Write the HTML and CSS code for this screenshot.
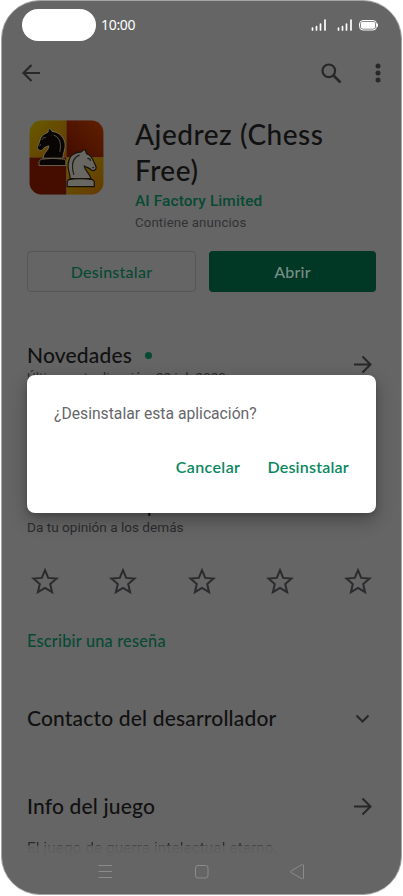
FILE: index.html
```html
<!DOCTYPE html>
<html lang="es">
<head>
<meta charset="utf-8">
<title>Ajedrez (Chess Free)</title>
<link rel="stylesheet" href="styles.css">
</head>
<body>
<div class="phone">
  <header class="status">
    <span class="camera"></span>
    <span class="clock">10:00</span>
    <svg class="signals" width="67" height="14" viewBox="0 0 67 14" fill="none" stroke="#fff" stroke-width="2" stroke-linecap="round"><path d="M1.500 12v-2M5.500 12V8.500M9.500 12V6M14 12V2M27.500 12v-2M31.500 12V8.500M35.500 12V6M40 12V2" stroke-width="1.700"/><rect x="48.500" y="2.500" width="17" height="9.500" rx="3.500" stroke-width="1"/><rect x="49.800" y="3.800" width="14.400" height="6.900" rx="2" fill="#fff" stroke="none"/><path d="M66.500 6v2.500" stroke-width="1"/></svg>
  </header>
  <nav class="toolbar">
    <svg class="back" width="19" height="18" viewBox="0 0 19 18" fill="none" stroke="#28282b" stroke-width="2.200"><path d="M18 9H1.500M9.500 1 1.500 9l8 8"/></svg>
    <svg class="search" width="21" height="21" viewBox="0 0 21 21" fill="none" stroke="#28282b"><circle cx="7.800" cy="7.800" r="6.300" stroke-width="2.200"/><path d="m12.500 12.500 7 7" stroke-width="2.700"/></svg>
    <svg class="more" width="6" height="20" viewBox="0 0 6 20" fill="#28282b"><circle cx="3" cy="3" r="2.500"/><circle cx="3" cy="10" r="2.500"/><circle cx="3" cy="17" r="2.500"/></svg>
  </nav>
  <main>
    <section class="app">
      <svg class="logo" width="75" height="75" viewBox="29 32 224 224">
        <defs>
          <clipPath id="tile"><rect x="30" y="33" width="222" height="222" rx="38"/></clipPath>
          <linearGradient id="gold" x1="0" y1="0" x2="1" y2="1"><stop offset="0" stop-color="#675b00"/><stop offset="1" stop-color="#653900"/></linearGradient>
          <linearGradient id="rust" x1="1" y1="0" x2="0" y2="1"><stop offset="0" stop-color="#602000"/><stop offset="1" stop-color="#430b00"/></linearGradient>
        </defs>
        <g clip-path="url(#tile)">
          <path d="M30 33h111v111H30z" fill="url(#gold)"/><path d="M141 33h111v111H141z" fill="url(#rust)"/>
          <path d="M30 144h111v111H30z" fill="#440d00"/><path d="M141 144h111v111H141z" fill="url(#gold)"/>
        </g>
        <g fill="#080504" stroke="#77705c" stroke-width="2.500" stroke-linejoin="round">
          <path d="M71 146c3-20 18-23 17-37-8 3-15 5-18 11-3 5-8 4-14 0-3-3-2-8 0-12 6-12 5-20 13-29 5-6 14-8 17-11 0-5 2-9 5-11 3 4 5 6 7 9 25 3 36 20 39 38 1 16-6 25-7 42z"/>
          <path d="M65 149q35-5 70 0l4 5v14H59v-12z"/>
        </g>
        <path d="M68 91c3-6 6-7 11-7M60 109l5-4M103 77c22 9 22 31 18 50" fill="none" stroke="#68634f" stroke-width="2.500"/>
        <g fill="#686762" stroke="#171008" stroke-width="3.500" stroke-linejoin="round">
          <path d="M152 207c-1-18-8-25-6-44 2-21 16-35 39-36 4-4 7-6 11-7 2 5 4 9 5 13 15 5 19 16 22 25 4 9 9 14 6 20-4 7-13 7-16 1-6-5-15-6-19-10 2 16 17 22 20 38z"/>
          <path d="M147 210q35-6 72 0l5 6v15h-81v-15z"/>
        </g>
        <path d="M180 137c-24 9-24 34-17 59M203 147c6-1 9 2 10 7M218 175l5-2" fill="none" stroke="#211b13" stroke-width="3.500"/>
      </svg>
      <div class="about">
        <h1><span class="t1">Ajedrez (Chess</span><br><span class="t2">Free)</span></h1>
        <p class="maker">AI Factory Limited</p>
        <p class="ads">Contiene anuncios</p>
      </div>
    </section>
    <div class="actions"><button class="btn outline">Desinstalar</button><button class="btn solid">Abrir</button></div>
    <section class="news">
      <div><h2>Novedades<i class="dot"></i></h2><p class="updated">Última actualización: 22 jul. 2020</p></div>
      <svg width="19" height="19" viewBox="0 0 19 19" fill="none" stroke="#28282b" stroke-width="2"><path d="M1 9.500h16.500M9.500 1.500l8 8-8 8"/></svg>
    </section>
    <section class="rate">
      <h2>Valora esta aplicación</h2>
      <p>Da tu opinión a los demás</p>
      <div class="stars">
        <svg viewBox="0 0 28 27"><path d="m14 2.200 3.200 7.700 8.300.7-6.300 5.400 1.900 8.200-7.100-4.300-7.100 4.300L8.800 16l-6.300-5.400 8.300-.7z"/></svg>
        <svg viewBox="0 0 28 27"><path d="m14 2.200 3.200 7.700 8.300.7-6.300 5.400 1.900 8.200-7.100-4.300-7.100 4.300L8.800 16l-6.300-5.400 8.300-.7z"/></svg>
        <svg viewBox="0 0 28 27"><path d="m14 2.200 3.200 7.700 8.300.7-6.300 5.400 1.900 8.200-7.100-4.300-7.100 4.300L8.800 16l-6.300-5.400 8.300-.7z"/></svg>
        <svg viewBox="0 0 28 27"><path d="m14 2.200 3.200 7.700 8.300.7-6.300 5.400 1.900 8.200-7.100-4.300-7.100 4.300L8.800 16l-6.300-5.400 8.300-.7z"/></svg>
        <svg viewBox="0 0 28 27"><path d="m14 2.200 3.200 7.700 8.300.7-6.300 5.400 1.900 8.200-7.100-4.300-7.100 4.300L8.800 16l-6.300-5.400 8.300-.7z"/></svg>
      </div>
      <a class="review">Escribir una reseña</a>
    </section>
    <section class="row contact"><h2>Contacto del desarrollador</h2><svg width="19" height="19" viewBox="0 0 19 19" fill="none" stroke="#28282b" stroke-width="2"><path d="m3.500 6.500 6 6 6-6"/></svg></section>
    <section class="row info"><h2>Info del juego</h2><svg width="19" height="19" viewBox="0 0 19 19" fill="none" stroke="#28282b" stroke-width="2"><path d="M1 9.500h16.500M9.500 1.500l8 8-8 8"/></svg></section>
    <p class="summary"><span>El juego de guerra intelectual eterno.</span></p>
  </main>
  <footer class="keys">
    <svg width="207" height="17" viewBox="0 0 207 17" fill="none" stroke="#8c8c8c" stroke-width="1"><path d="M.5 2.500H14M.5 8.500H14M.5 14.500H14"/><rect x="97.500" y="2.500" width="12.500" height="12.500" rx="2.500"/><path d="M205.500 2v13.500q-1 .5-2 0L193 9.500q-1-.7 0-1.400l10.500-6.300q1-.5 2 .2z"/></svg>
  </footer>
  <div class="dialog" role="dialog">
    <p>¿Desinstalar esta aplicación?</p>
    <div class="choices"><button class="cancel">Cancelar</button><button class="confirm">Desinstalar</button></div>
  </div>
</div>
</body>
</html>
```
FILE: styles.css
```css
* { box-sizing: border-box; margin: 0; padding: 0; }
body { background: #fff; width: 403px; height: 896px; overflow: hidden; font-family: Roboto, sans-serif; color: #2b2b2d; }
svg { display: block; flex: none; }
button { border: 0; background: none; font: inherit; }
.phone { position: relative; width: 401px; height: 895px; margin-left: 1px; background: #656565; border: 1px solid #a5a6a5; border-radius: 39px; overflow: hidden; display: flex; flex-direction: column; }
.status { height: 49px; padding: 8px 23px 0 20px; display: flex; align-items: flex-start; flex: none; }
.camera { width: 74px; height: 32px; border-radius: 16px; background: #fff; }
.clock { margin: 6px 0 0 5px; font: 14px/20px "Noto Sans", sans-serif; color: #fff; letter-spacing: -.3px; }
.signals { margin: 9px 0 0 auto; }
.toolbar { height: 46px; display: flex; align-items: center; padding: 0 20px 0 20px; flex: none; }
.search { margin-left: auto; }
.more { margin-left: 33px; }
main { padding: 0 25px; flex: none; }
.app { padding: 24px 0 0 2px; display: flex; height: 155px; }
.about { margin-left: 31px; }
h1, h2, .btn, .review, .choices { font-family: Lato, sans-serif; font-weight: 500; }
h1 { font-size: 28px; line-height: 36px; margin-top: -4px; color: #111; white-space: nowrap; }
.t1 { letter-spacing: .52px; }
.t2 { letter-spacing: .5px; }
.maker { font-size: 15.4px; line-height: 20px; font-weight: 500; color: #064a33; margin-top: 3px; letter-spacing: .12px; }
.ads { font-size: 13.2px; line-height: 18px; margin-top: 3px; color: #323234; letter-spacing: .15px; }
.actions { display: flex; gap: 13px; }
.btn { flex: 1 1 0; height: 41px; padding: 0 0 1px; border-radius: 4px; font-size: 16px; letter-spacing: .25px; }
.outline { border: 1px solid #545556; color: #064a33; }
.solid { background: #003725; color: #788f85; }
h2 { font-size: 21px; line-height: 26px; letter-spacing: .17px; color: #111; white-space: nowrap; }
.news { display: flex; justify-content: space-between; align-items: flex-start; margin-top: 50px; padding-right: 4px; }
.news svg { margin-top: 13px; }
.dot { display: inline-block; width: 7px; height: 7px; border-radius: 50%; background: #064a33; margin-left: 13px; vertical-align: 4px; }
.updated { font-size: 13.2px; line-height: 18px; letter-spacing: .15px; margin-top: 1px; }
.rate { margin-top: 104px; }
.rate p { font-size: 13.6px; line-height: 18px; margin-top: 1px; }
.stars { display: flex; justify-content: space-between; margin: 32px 4px 0; }
.stars svg { width: 28px; height: 27px; fill: none; stroke: #2b2b2e; stroke-width: 2; }
.review { display: block; margin-top: 36px; font-size: 16.3px; line-height: 20px; letter-spacing: .22px; color: #064a33; }
.row { display: flex; justify-content: space-between; align-items: center; padding-right: 4px; height: 26px; }
.contact { margin-top: 54px; }
.info { margin-top: 62px; }
.summary { margin-top: 19px; height: 20px; font-size: 15.5px; line-height: 20px; white-space: nowrap; }
.summary span { background: linear-gradient(#2b2b2d 0 6px, #5c5c5d 7px, #626262 17px); background-clip: text; color: transparent; }
.keys { position: absolute; left: 96px; bottom: 14px; }
.dialog { position: absolute; left: 25px; top: 374px; width: 349px; height: 138px; border-radius: 8px; background: #fff; box-shadow: 0 7px 18px rgba(0,0,0,.3), 0 2px 5px rgba(0,0,0,.12); padding: 29px 27px 0; display: flex; flex-direction: column; }
.dialog p { font-size: 15.7px; line-height: 20px; color: #66676a; }
.choices { display: flex; justify-content: flex-end; gap: 27px; margin-top: 33px; font-size: 16px; line-height: 20px; font-weight: 600; color: #0b875f; }
.choices button { color: inherit; letter-spacing: .22px; }
.choices .cancel { letter-spacing: .4px; }
```
